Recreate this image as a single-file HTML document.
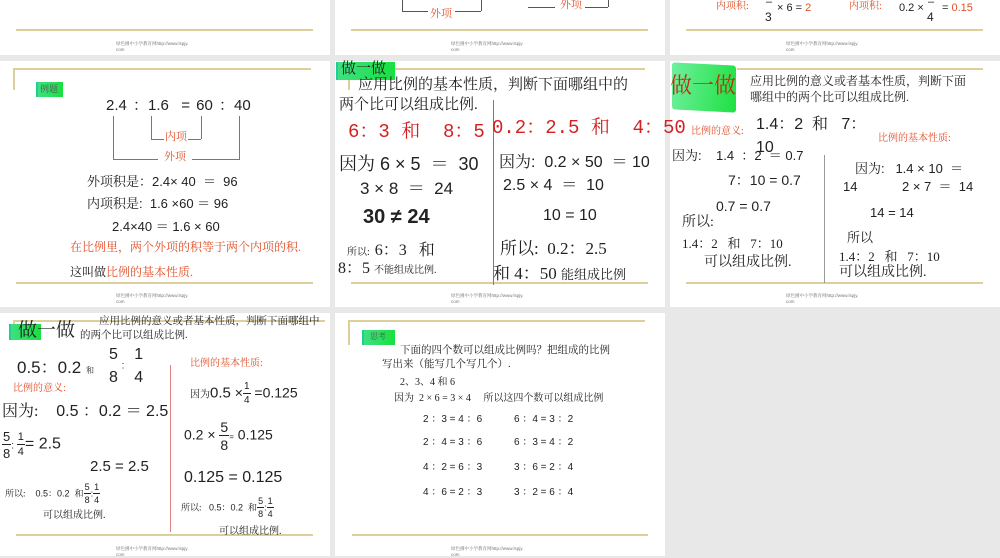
<!DOCTYPE html>
<html><head><meta charset="utf-8"><style>
*{margin:0;padding:0;box-sizing:border-box}
body{width:1000px;height:556px;background:#e8e8e8;position:relative;overflow:hidden;font-family:"Liberation Sans","Noto Serif CJK SC",serif}
.s{position:absolute;background:#fff}
.t{position:absolute;white-space:nowrap;line-height:1;color:#222;font-family:"Liberation Sans","Noto Serif CJK SC",serif}
.c{font-family:"Liberation Serif","Noto Serif CJK SC",serif}
.r{color:#e0502a}
.rd{color:#d42020}
.g{position:absolute;height:2px;background:#dccf9c}
.gv{position:absolute;width:2px;background:#dccf9c}
.f{position:absolute;font-size:4.5px;color:#777;line-height:1.3;white-space:nowrap}
.ln{position:absolute;background:#555}
.fr{display:inline-flex;flex-direction:column;align-items:center;vertical-align:middle;line-height:1}
.fr b{font-weight:normal;border-bottom:1px solid #222;padding:0 1px 1px}
.fr i{font-style:normal;padding-top:2px}
.lab{position:absolute;background:linear-gradient(90deg,#3fe080,#18e040);border-left:2px solid #2c9;}
</style></head><body>
<!-- Row1 -->
<div class="s" style="left:0;top:0;width:330px;height:55px"></div>
<div class="s" style="left:335px;top:0;width:330px;height:55px"></div>
<div class="s" style="left:670px;top:0;width:330px;height:55px"></div>
<div class="g" style="left:16px;top:29px;width:297px"></div>
<div class="g" style="left:351px;top:29px;width:297px"></div>
<div class="g" style="left:686px;top:29px;width:297px"></div>
<div class="f" style="left:116px;top:41px">绿色圃中小学教育网http://www.lspjy.<br>com</div>
<div class="f" style="left:451px;top:41px">绿色圃中小学教育网http://www.lspjy.<br>com</div>
<div class="f" style="left:786px;top:41px">绿色圃中小学教育网http://www.lspjy.<br>com</div>
<div class="ln" style="left:402px;top:0;width:1px;height:11px"></div>
<div class="ln" style="left:402px;top:11px;width:26px;height:1px"></div>
<div class="t c r" style="left:430px;top:9px;font-size:11px">外项</div>
<div class="ln" style="left:455px;top:11px;width:26px;height:1px"></div>
<div class="ln" style="left:481px;top:0;width:1px;height:11px"></div>
<div class="ln" style="left:528px;top:7px;width:27px;height:1px"></div>
<div class="t c r" style="left:560px;top:0px;font-size:11px">外项</div>
<div class="ln" style="left:585px;top:7px;width:23px;height:1px"></div>
<div class="ln" style="left:608px;top:0;width:1px;height:7px"></div>
<div class="t c r" style="left:716px;top:2px;font-size:10px">内项积:</div>
<div class="t" style="left:766px;top:-3px;font-size:11px">–</div>
<div class="t" style="left:765px;top:11px;font-size:12px">3</div>
<div class="t" style="left:777px;top:3px;font-size:11px">× 6 = <span class="r">2</span></div>
<div class="t c r" style="left:849px;top:2px;font-size:10px">内项积:</div>
<div class="t" style="left:899px;top:3px;font-size:11px">0.2 ×</div>
<div class="t" style="left:928px;top:-3px;font-size:11px">–</div>
<div class="t" style="left:927px;top:11px;font-size:12px">4</div>
<div class="t" style="left:942px;top:3px;font-size:11px">= <span class="r">0.15</span></div>

<!-- Row2 -->
<div class="s" style="left:0;top:61px;width:330px;height:246px"></div>
<div class="s" style="left:335px;top:61px;width:330px;height:246px"></div>
<div class="s" style="left:670px;top:61px;width:330px;height:246px"></div>
<!-- slide 2-1 -->
<div class="g" style="left:13px;top:68px;width:298px"></div>
<div class="gv" style="left:13px;top:68px;height:22px"></div>
<div class="g" style="left:16px;top:282px;width:297px"></div>
<div class="f" style="left:116px;top:293px">绿色圃中小学教育网http://www.lspjy.<br>com</div>
<div class="lab" style="left:36px;top:82px;width:27px;height:15px"></div>
<div class="t c" style="left:40px;top:85px;font-size:9px;color:#555">例题</div>
<div class="t" style="left:106px;top:98px;font-size:15px;word-spacing:2px">2.4 ：1.6 &nbsp;= 60 ：40</div>
<div class="ln" style="left:113px;top:116px;width:1px;height:44px;background:#777"></div>
<div class="ln" style="left:151px;top:116px;width:1px;height:23px;background:#777"></div>
<div class="ln" style="left:201px;top:116px;width:1px;height:23px;background:#777"></div>
<div class="ln" style="left:239px;top:116px;width:1px;height:44px;background:#777"></div>
<div class="ln" style="left:151px;top:139px;width:13px;height:1px;background:#777"></div>
<div class="ln" style="left:188px;top:139px;width:13px;height:1px;background:#777"></div>
<div class="ln" style="left:113px;top:159px;width:45px;height:1px;background:#777"></div>
<div class="ln" style="left:192px;top:159px;width:47px;height:1px;background:#777"></div>
<div class="t c r" style="left:165px;top:132px;font-size:11px">内项</div>
<div class="t c r" style="left:164px;top:152px;font-size:11px">外项</div>
<div class="t" style="left:87px;top:175px;font-size:13px">外项积是：2.4× 40 &nbsp;＝ &nbsp;96</div>
<div class="t" style="left:87px;top:197px;font-size:13px">内项积是: &nbsp;1.6 ×60 ＝ 96</div>
<div class="t" style="left:112px;top:220px;font-size:13px">2.4×40 ＝ 1.6 × 60</div>
<div class="t c r" style="left:70px;top:241px;font-size:12px">在比例里，两个外项的积等于两个内项的积.</div>
<div class="t c" style="left:70px;top:266px;font-size:12px">这叫做<span class="r">比例的基本性质.</span></div>
<!-- slide 2-2 -->
<div class="g" style="left:395px;top:68px;width:250px"></div>
<div class="g" style="left:351px;top:282px;width:297px"></div>
<div class="f" style="left:451px;top:293px">绿色圃中小学教育网http://www.lspjy.<br>com</div>
<div class="lab" style="left:336px;top:62px;width:59px;height:18px"></div>
<div class="t c" style="left:341px;top:62px;font-size:15px;color:#222">做一做</div>
<div class="gv" style="left:348px;top:80px;height:10px"></div>
<div class="t c" style="left:358px;top:78px;font-size:15px">应用比例的基本性质，判断下面哪组中的</div>
<div class="t c" style="left:339px;top:98px;font-size:15px">两个比可以组成比例.</div>
<div class="ln" style="left:493px;top:100px;width:1px;height:185px;background:#e05050"></div>
<div class="t rd" style="left:348px;top:123px;font-size:19px;font-family:'Liberation Mono','Noto Serif CJK SC',monospace">6：3 和 &nbsp;8：5</div>
<div class="t rd" style="left:492px;top:119px;font-size:19px;font-family:'Liberation Mono','Noto Serif CJK SC',monospace">0.2：2.5 和 &nbsp;4：50</div>
<div class="t" style="left:339px;top:155px;font-size:18px">因为 6 × 5 &nbsp;＝ &nbsp;30</div>
<div class="t" style="left:360px;top:180px;font-size:17px">3 × 8 &nbsp;＝ &nbsp;24</div>
<div class="t" style="left:363px;top:207px;font-size:20px;font-weight:bold">30 ≠ 24</div>
<div class="t c" style="left:347px;top:243px;font-size:10px">所以: &nbsp;<span style="font-size:16px">6：3 &nbsp;&nbsp;和</span></div>
<div class="t c" style="left:338px;top:261px;font-size:16px">8：5 <span style="font-size:10px">不能组成比例.</span></div>
<div class="t" style="left:499px;top:155px;font-size:16px">因为: &nbsp;0.2 × 50 &nbsp;＝ 10</div>
<div class="t" style="left:503px;top:178px;font-size:16px">2.5 × 4 &nbsp;＝ &nbsp;10</div>
<div class="t" style="left:543px;top:208px;font-size:16px">10 = 10</div>
<div class="t c" style="left:500px;top:240px;font-size:17px">所以: &nbsp;0.2：2.5</div>
<div class="t c" style="left:493px;top:265px;font-size:17px">和 4：50 <span style="font-size:13px">能组成比例</span></div>
<!-- slide 2-3 -->
<div class="g" style="left:737px;top:68px;width:246px"></div>
<div class="g" style="left:686px;top:282px;width:297px"></div>
<div class="f" style="left:786px;top:293px">绿色圃中小学教育网http://www.lspjy.<br>com</div>
<div style="position:absolute;left:672px;top:64px;width:64px;height:47px;background:linear-gradient(100deg,#6ff0a0,#1ee040);border-radius:3px;transform:skewY(3deg)"></div>
<div class="t c" style="left:670px;top:75px;font-size:22px;color:#c03010">做一做</div>
<div class="t c" style="left:750px;top:75px;font-size:12px">应用比例的意义或者基本性质，判断下面</div>
<div class="t c" style="left:750px;top:91px;font-size:12px">哪组中的两个比可以组成比例.</div>
<div class="t c r" style="left:691px;top:127px;font-size:10px">比例的意义:</div>
<div class="t" style="left:756px;top:117px;font-size:16px">1.4：2 &nbsp;和 &nbsp;&nbsp;7：</div>
<div class="t" style="left:756px;top:140px;font-size:16px">10</div>
<div class="t c r" style="left:878px;top:134px;font-size:10px">比例的基本性质:</div>
<div class="t" style="left:672px;top:149px;font-size:13px">因为: &nbsp;&nbsp;&nbsp;1.4 &nbsp;：2 &nbsp;＝ 0.7</div>
<div class="t" style="left:728px;top:173px;font-size:14px">7：10 = 0.7</div>
<div class="t" style="left:716px;top:199px;font-size:14px">0.7 = 0.7</div>
<div class="t c" style="left:682px;top:216px;font-size:14px">所以:</div>
<div class="t c" style="left:682px;top:237px;font-size:13px">1.4：2 &nbsp;&nbsp;和 &nbsp;&nbsp;7：10</div>
<div class="t c" style="left:704px;top:256px;font-size:14px">可以组成比例.</div>
<div class="ln" style="left:824px;top:155px;width:1px;height:128px;background:#999"></div>
<div class="t" style="left:855px;top:162px;font-size:13px">因为: &nbsp;&nbsp;1.4 × 10 &nbsp;＝</div>
<div class="t" style="left:843px;top:180px;font-size:13px">14</div>
<div class="t" style="left:902px;top:180px;font-size:13px">2 × 7 &nbsp;＝ &nbsp;14</div>
<div class="t" style="left:870px;top:206px;font-size:13px">14 = 14</div>
<div class="t c" style="left:847px;top:231px;font-size:13px">所以</div>
<div class="t c" style="left:839px;top:250px;font-size:13px">1.4：2 &nbsp;&nbsp;和 &nbsp;&nbsp;7：10</div>
<div class="t c" style="left:839px;top:266px;font-size:14px">可以组成比例.</div>

<!-- Row3 -->
<div class="s" style="left:0;top:313px;width:330px;height:243px"></div>
<div class="s" style="left:335px;top:313px;width:330px;height:243px"></div>
<!-- slide 3-1 -->
<div class="g" style="left:13px;top:320px;width:312px"></div>
<div class="gv" style="left:13px;top:320px;height:20px"></div>
<div class="g" style="left:16px;top:534px;width:297px"></div>
<div class="f" style="left:116px;top:546px">绿色圃中小学教育网http://www.lspjy.<br>com</div>
<div class="lab" style="left:9px;top:324px;width:32px;height:16px"></div>
<div class="t c" style="left:18px;top:321px;font-size:19px">做一做</div>
<div class="t c" style="left:99px;top:317px;font-size:10.5px">应用比例的意义或者基本性质，判断下面哪组中</div>
<div class="t c" style="left:80px;top:331px;font-size:10.5px">的两个比可以组成比例.</div>
<div class="t" style="left:17px;top:359px;font-size:17px">0.5：0.2 <span class="c" style="font-size:8px">和</span></div>
<div class="t" style="left:108px;top:347px;font-size:16px"><span class="fr"><b style="border:0">5</b><i style="padding-top:6px">8</i></span><span style="font-size:10px;vertical-align:middle"> : </span><span class="fr" style="margin-left:6px"><b style="border:0">1</b><i style="padding-top:6px">4</i></span></div>
<div class="t c r" style="left:13px;top:384px;font-size:10px">比例的意义:</div>
<div class="t" style="left:2px;top:404px;font-size:16px"><span class="c">因为:</span> &nbsp;&nbsp;&nbsp;0.5 ：0.2 ＝ 2.5</div>
<div class="t" style="left:2px;top:430px;font-size:14px"><span class="fr" style="font-size:13px"><b>5</b><i>8</i></span><span style="font-size:10px">: </span><span class="fr" style="font-size:11px"><b>1</b><i>4</i></span><span style="font-size:16px">= 2.5</span></div>
<div class="t" style="left:90px;top:459px;font-size:15px">2.5 = 2.5</div>
<div class="t" style="left:5px;top:483px;font-size:9px"><span class="c">所以:</span> &nbsp;&nbsp;&nbsp;0.5：0.2 &nbsp;<span class="c">和</span><span class="fr"><b>5</b><i>8</i></span>:<span class="fr"><b>1</b><i>4</i></span></div>
<div class="t c" style="left:43px;top:511px;font-size:10px">可以组成比例.</div>
<div class="ln" style="left:170px;top:365px;width:1px;height:167px;background:#e08080"></div>
<div class="t c r" style="left:190px;top:359px;font-size:10px">比例的基本性质:</div>
<div class="t" style="left:190px;top:382px;font-size:14px"><span class="c" style="font-size:10px">因为</span><span style="font-size:15px">0.5</span> ×<span class="fr" style="font-size:10px"><b>1</b><i>4</i></span> =0.125</div>
<div class="t" style="left:184px;top:420px;font-size:14px">0.2 × <span class="fr"><b>5</b><i>8</i></span><span style="font-size:8px">=</span> 0.125</div>
<div class="t" style="left:184px;top:470px;font-size:16px">0.125 = 0.125</div>
<div class="t" style="left:181px;top:497px;font-size:9px"><span class="c">所以:</span> &nbsp;&nbsp;0.5：0.2 &nbsp;<span class="c">和</span><span class="fr"><b>5</b><i>8</i></span>:<span class="fr"><b>1</b><i>4</i></span></div>
<div class="t c" style="left:219px;top:527px;font-size:10px">可以组成比例.</div>
<!-- slide 3-2 -->
<div class="g" style="left:348px;top:320px;width:297px"></div>
<div class="gv" style="left:348px;top:320px;height:25px"></div>
<div class="g" style="left:352px;top:534px;width:296px"></div>
<div class="f" style="left:451px;top:546px">绿色圃中小学教育网http://www.lspjy.<br>com</div>
<div class="lab" style="left:362px;top:330px;width:33px;height:15px"></div>
<div class="t c" style="left:370px;top:333px;font-size:8px;color:#555">思考</div>
<div class="t c" style="left:400px;top:346px;font-size:10.5px">下面的四个数可以组成比例吗？把组成的比例</div>
<div class="t c" style="left:382px;top:360px;font-size:10.5px">写出来（能写几个写几个）.</div>
<div class="t c" style="left:400px;top:378px;font-size:10px">2、3、4 和 6</div>
<div class="t c" style="left:394px;top:394px;font-size:10px">因为 &nbsp;2 × 6 = 3 × 4 &nbsp;&nbsp;&nbsp;&nbsp;所以这四个数可以组成比例</div>
<div class="t" style="left:423px;top:415px;font-size:10px">2 ：3 = 4 ：6</div>
<div class="t" style="left:514px;top:415px;font-size:10px">6 ：4 = 3 ：2</div>
<div class="t" style="left:423px;top:438px;font-size:10px">2 ：4 = 3 ：6</div>
<div class="t" style="left:514px;top:438px;font-size:10px">6 ：3 = 4 ：2</div>
<div class="t" style="left:423px;top:463px;font-size:10px">4 ：2 = 6 ：3</div>
<div class="t" style="left:514px;top:463px;font-size:10px">3 ：6 = 2 ：4</div>
<div class="t" style="left:423px;top:488px;font-size:10px">4 ：6 = 2 ：3</div>
<div class="t" style="left:514px;top:488px;font-size:10px">3 ：2 = 6 ：4</div>
</body></html>
